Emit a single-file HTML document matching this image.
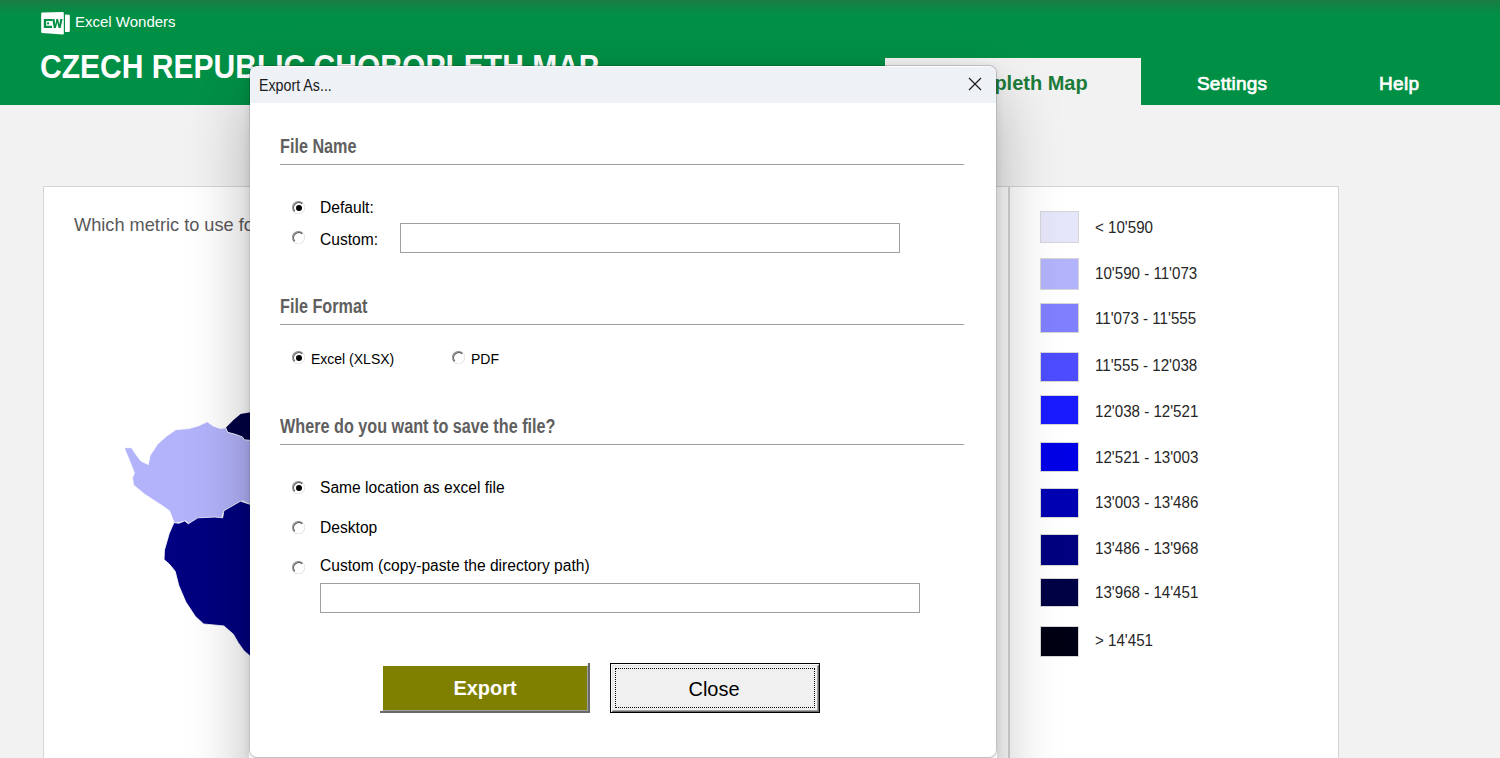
<!DOCTYPE html>
<html><head><meta charset="utf-8">
<style>
*{margin:0;padding:0;box-sizing:border-box}
html,body{width:1500px;height:758px;overflow:hidden;background:#f2f2f2;font-family:"Liberation Sans",sans-serif;position:relative}
.abs{position:absolute}
#hdr{left:0;top:0;width:1500px;height:105px;background:linear-gradient(#1a7d44 0px,#009045 15px,#009045 100%)}
#logo{left:40px;top:10px;width:32px;height:26px}
#brand{left:75px;top:13px;font-size:15px;color:#fff;white-space:nowrap}
#title{left:40px;top:48px;font-size:33px;font-weight:bold;color:#fff;white-space:nowrap;transform-origin:0 0;transform:scaleX(0.91)}
.tab{top:58px;height:47px;color:#fff;font-weight:bold;font-size:18px;white-space:nowrap}
#tab1{left:885px;width:256px;background:#f2f2f2;color:#1d7b3a;font-size:20px}
.panel{background:#fff;border:1px solid #d5d5d5}
#p1{left:43px;top:186px;width:966px;height:700px}
#p2{left:1009px;top:186px;width:330px;height:700px}
#q{left:74px;top:215px;font-size:18.2px;color:#595959;white-space:nowrap}
.lg{left:1040px;width:39px;border:1px solid #d6d6d6}
.lt{left:1095px;font-size:17px;color:#262626;white-space:nowrap;transform-origin:0 0;transform:scaleX(0.89)}
#dlg{left:249px;top:65px;width:748px;height:693px;background:#fff;border:1px solid rgba(0,0,0,0.2);background-clip:padding-box;border-radius:8px;box-shadow:0 2px 10px rgba(0,0,0,0.09);overflow:hidden}
#tbar{left:0;top:0;width:100%;height:36px;background:#eef2f7}
.sec{left:30px;font-size:20px;font-weight:bold;color:#5f5f5f;white-space:nowrap;transform-origin:0 0;transform:scaleX(0.81)}
.hr{left:30px;width:684px;height:1px;background:#a0a0a0}
.rt{font-size:16px;color:#000;white-space:nowrap;transform-origin:0 0;transform:scaleX(0.975)}
.radio{width:13px;height:13px}
.tb{border:1px solid #a0a0a0;background:#fff}
</style></head>
<body>
<div id="hdr" class="abs">
  <svg id="logo" class="abs" width="32" height="26" viewBox="0 0 32 26"><path d="M2.2 2.6L22.8 2.0Q23.8 2 23.8 3L23.8 23.8Q23.8 24.6 22.8 24.5L2.2 23.1Q1.2 23 1.2 22L1.2 3.6Q1.2 2.6 2.2 2.6Z" fill="#fff"/><path d="M25 4.6L29 4.8Q29.8 4.9 29.8 5.8L29.8 21Q29.8 21.8 29 21.9L25 22.1Z" fill="#fff"/><path d="M3.8 8.9L12.4 8.9L12.4 11.1L6.2 11.1L6.2 15.8L12 15.8L12 18L3.8 18Z" fill="#009045"/><circle cx="8.1" cy="13.4" r="1.1" fill="#009045"/><path d="M12.2 9L14.4 9L15.6 14.6L16.3 9L18.1 9L19.3 14.6L20.3 9L22.6 9L20.6 18L18.6 18L17.2 12.6L16.0 18L13.8 18Z" fill="#009045"/></svg>
  <div id="brand" class="abs">Excel Wonders</div>
  <div id="title" class="abs">CZECH REPUBLIC CHOROPLETH MAP</div>
  <div id="tab1" class="abs tab"><span class="abs" style="left:50.5px;top:14px">Choropleth Map</span></div>
  <div class="abs tab" style="left:1197px;top:73px;height:auto;font-weight:normal;font-size:19px;-webkit-text-stroke:0.7px #fff;letter-spacing:0.2px">Settings</div>
  <div class="abs tab" style="left:1379px;top:73px;height:auto;font-weight:normal;font-size:19px;-webkit-text-stroke:0.7px #fff;letter-spacing:0.3px">Help</div>
</div>

<div id="p1" class="abs panel"></div>
<div id="p2" class="abs panel"></div>
<div id="q" class="abs">Which metric to use for the map?</div>

<svg class="abs" style="left:0;top:0" width="260" height="758">
  <path fill="#000045" d="M225.8,427.7 L233.2,420.3 L240.6,413.9 L252,412 L252,441 L244.3,439.7 L242.4,436.9 L235,434.2 L227.7,432.3Z"/>
  <path fill="#b3b3fc" stroke="#fff" stroke-width="0.8" d="M124.2,447.7 L131.6,447.7 L135.3,453.6 L140.9,461 L148.2,464.6 L150.1,455.4 L157.5,444.3 L166.7,436 L176,429.6 L188.9,428.6 L198.1,425.9 L207.4,421.8 L212.9,425.9 L220.3,428.6 L225.8,427.7 L227.7,432.3 L235,434.2 L242.4,436.9 L244.3,439.7 L252,440.6 L252,505.3 L242.4,500.7 L235,505.3 L224,510.8 L221.2,519.1 L214.7,518.2 L201.8,518.2 L188.9,523.8 L185.2,521 L178.7,522.8 L174.1,522.8 L169.5,510.8 L163,506.2 L144.6,494.2 L133.5,485 L132.5,477.6 L134.4,473 L128.9,459.1Z"/>
  <path fill="#000080" stroke="#fff" stroke-width="0.8" d="M174,522.6 L178.8,523.3 L184.7,520.9 L188.3,523.8 L197.8,517.8 L214.4,517.1 L222.7,517.8 L223.9,510.7 L240.5,501.2 L252,505 L252,657 L249.5,655.6 L244,650.8 L238.1,642.5 L233.4,634.2 L223.9,625.9 L203.7,624 L195.4,616.4 L185.9,602.1 L178.8,585.5 L175.2,571.3 L169.3,564.1 L164,559.4 L164.5,549.9 L169.3,533.3Z"/>
</svg>

<div class="abs lg" style="top:211px;height:32px;background:#e6e6fa"></div>
<div class="abs lg" style="top:258px;height:32px;background:#b3b3fc"></div>
<div class="abs lg" style="top:303px;height:30px;background:#8080ff"></div>
<div class="abs lg" style="top:352px;height:30px;background:#4d4dff"></div>
<div class="abs lg" style="top:395px;height:30px;background:#1a1aff"></div>
<div class="abs lg" style="top:442px;height:30px;background:#0000e6"></div>
<div class="abs lg" style="top:488px;height:30px;background:#0000b3"></div>
<div class="abs lg" style="top:534px;height:32px;background:#000080"></div>
<div class="abs lg" style="top:578px;height:29px;background:#000045"></div>
<div class="abs lg" style="top:626px;height:31px;background:#000014"></div>

<div class="abs lt" style="top:218px">&lt; 10'590</div>
<div class="abs lt" style="top:264px">10'590 - 11'073</div>
<div class="abs lt" style="top:309px">11'073 - 11'555</div>
<div class="abs lt" style="top:356px">11'555 - 12'038</div>
<div class="abs lt" style="top:402px">12'038 - 12'521</div>
<div class="abs lt" style="top:448px">12'521 - 13'003</div>
<div class="abs lt" style="top:493px">13'003 - 13'486</div>
<div class="abs lt" style="top:539px">13'486 - 13'968</div>
<div class="abs lt" style="top:583px">13'968 - 14'451</div>
<div class="abs lt" style="top:631px">&gt; 14'451</div>

<div class="abs" style="left:249px;top:65px;width:748px;height:900px;border-radius:8px;box-shadow:0 30px 64px rgba(0,0,0,0.28)"></div>
<div id="dlg" class="abs"><div class="abs" style="left:0;top:1px;width:100%;height:100%">
  <div id="tbar" class="abs"></div>
  <div class="abs" style="left:9px;top:10px;font-size:16px;color:#1a1a1a;white-space:nowrap;transform-origin:0 0;transform:scaleX(0.89)">Export As...</div>
  <svg class="abs" style="left:718px;top:10px" width="14" height="14" viewBox="0 0 14 14"><path d="M1 1L13 13M13 1L1 13" stroke="#1a1a1a" stroke-width="1.2"/></svg>

  <div class="abs sec" style="top:68px">File Name</div>
  <div class="abs hr" style="top:97px"></div>
  <svg class="abs radio" style="left:42px;top:134px" width="13" height="13" viewBox="0 0 13 13"><circle cx="6.5" cy="6.5" r="5.5" fill="#fff"/><path d="M2.25 10.75A6 6 0 0 1 10.75 2.25" stroke="#9a9a9a" stroke-width="1.2" fill="none"/><path d="M2.9 10.1A5.1 5.1 0 0 1 10.1 2.9" stroke="#5a5a5a" stroke-width="1.1" fill="none"/><path d="M11 2A6.3 6.3 0 0 1 2 11" stroke="#e3e3e3" stroke-width="1" fill="none"/><circle cx="7" cy="7" r="3" fill="#000"/></svg>
  <div class="abs rt" style="left:70px;top:132px">Default:</div>
  <svg class="abs radio" style="left:42px;top:164px" width="13" height="13" viewBox="0 0 13 13"><circle cx="6.5" cy="6.5" r="5.5" fill="#fff"/><path d="M2.25 10.75A6 6 0 0 1 10.75 2.25" stroke="#9a9a9a" stroke-width="1.2" fill="none"/><path d="M2.9 10.1A5.1 5.1 0 0 1 10.1 2.9" stroke="#5a5a5a" stroke-width="1.1" fill="none"/><path d="M11 2A6.3 6.3 0 0 1 2 11" stroke="#e3e3e3" stroke-width="1" fill="none"/></svg>
  <div class="abs rt" style="left:70px;top:164px">Custom:</div>
  <div class="abs tb" style="left:150px;top:156px;width:500px;height:30px"></div>

  <div class="abs sec" style="top:228px">File Format</div>
  <div class="abs hr" style="top:257px"></div>
  <svg class="abs radio" style="left:42px;top:284px" width="13" height="13" viewBox="0 0 13 13"><circle cx="6.5" cy="6.5" r="5.5" fill="#fff"/><path d="M2.25 10.75A6 6 0 0 1 10.75 2.25" stroke="#9a9a9a" stroke-width="1.2" fill="none"/><path d="M2.9 10.1A5.1 5.1 0 0 1 10.1 2.9" stroke="#5a5a5a" stroke-width="1.1" fill="none"/><path d="M11 2A6.3 6.3 0 0 1 2 11" stroke="#e3e3e3" stroke-width="1" fill="none"/><circle cx="7" cy="7" r="3" fill="#000"/></svg>
  <div class="abs rt" style="left:61px;top:284px;font-size:14px;transform:none">Excel (XLSX)</div>
  <svg class="abs radio" style="left:202px;top:284px" width="13" height="13" viewBox="0 0 13 13"><circle cx="6.5" cy="6.5" r="5.5" fill="#fff"/><path d="M2.25 10.75A6 6 0 0 1 10.75 2.25" stroke="#9a9a9a" stroke-width="1.2" fill="none"/><path d="M2.9 10.1A5.1 5.1 0 0 1 10.1 2.9" stroke="#5a5a5a" stroke-width="1.1" fill="none"/><path d="M11 2A6.3 6.3 0 0 1 2 11" stroke="#e3e3e3" stroke-width="1" fill="none"/></svg>
  <div class="abs rt" style="left:221px;top:284px;font-size:14px;transform:none">PDF</div>

  <div class="abs sec" style="top:348px">Where do you want to save the file?</div>
  <div class="abs hr" style="top:377px"></div>
  <svg class="abs radio" style="left:42px;top:414px" width="13" height="13" viewBox="0 0 13 13"><circle cx="6.5" cy="6.5" r="5.5" fill="#fff"/><path d="M2.25 10.75A6 6 0 0 1 10.75 2.25" stroke="#9a9a9a" stroke-width="1.2" fill="none"/><path d="M2.9 10.1A5.1 5.1 0 0 1 10.1 2.9" stroke="#5a5a5a" stroke-width="1.1" fill="none"/><path d="M11 2A6.3 6.3 0 0 1 2 11" stroke="#e3e3e3" stroke-width="1" fill="none"/><circle cx="7" cy="7" r="3" fill="#000"/></svg>
  <div class="abs rt" style="left:70px;top:412px">Same location as excel file</div>
  <svg class="abs radio" style="left:42px;top:454px" width="13" height="13" viewBox="0 0 13 13"><circle cx="6.5" cy="6.5" r="5.5" fill="#fff"/><path d="M2.25 10.75A6 6 0 0 1 10.75 2.25" stroke="#9a9a9a" stroke-width="1.2" fill="none"/><path d="M2.9 10.1A5.1 5.1 0 0 1 10.1 2.9" stroke="#5a5a5a" stroke-width="1.1" fill="none"/><path d="M11 2A6.3 6.3 0 0 1 2 11" stroke="#e3e3e3" stroke-width="1" fill="none"/></svg>
  <div class="abs rt" style="left:70px;top:452px">Desktop</div>
  <svg class="abs radio" style="left:42px;top:494px" width="13" height="13" viewBox="0 0 13 13"><circle cx="6.5" cy="6.5" r="5.5" fill="#fff"/><path d="M2.25 10.75A6 6 0 0 1 10.75 2.25" stroke="#9a9a9a" stroke-width="1.2" fill="none"/><path d="M2.9 10.1A5.1 5.1 0 0 1 10.1 2.9" stroke="#5a5a5a" stroke-width="1.1" fill="none"/><path d="M11 2A6.3 6.3 0 0 1 2 11" stroke="#e3e3e3" stroke-width="1" fill="none"/></svg>
  <div class="abs rt" style="left:70px;top:490px">Custom (copy-paste the directory path)</div>
  <div class="abs tb" style="left:70px;top:516px;width:600px;height:30px"></div>

  <div class="abs" style="left:132px;top:598px;width:206px;height:46px;background:#808000;border-style:solid;border-width:1px;border-color:#fff #a0a0a0 #a0a0a0 #fff"></div>
  <div class="abs" style="left:338px;top:596px;width:2px;height:50px;background:#696969"></div>
  <div class="abs" style="left:130px;top:644px;width:210px;height:2px;background:#696969"></div>
  <div class="abs" id="exp" style="left:132px;top:607.5px;width:206px;text-align:center;color:#fff;font-weight:bold;font-size:21px;line-height:25px;transform:scaleX(0.95)">Export</div>
  <div class="abs" style="left:360px;top:596px;width:210px;height:50px;background:#f0f0f0;border:1px solid #000;box-shadow:inset 1px 1px 0 #fff, inset -1px -1px 0 #696969, inset 2px 2px 0 #e3e3e3, inset -2px -2px 0 #a0a0a0"></div>
  <div class="abs" style="left:365px;top:601px;width:200px;height:40px;border:1px dotted #000"></div>
  <div class="abs" id="cls" style="left:359px;top:608.5px;width:210px;text-align:center;color:#000;font-size:21px;line-height:25px;transform:scaleX(0.95)">Close</div>
</div></div>
</body></html>
